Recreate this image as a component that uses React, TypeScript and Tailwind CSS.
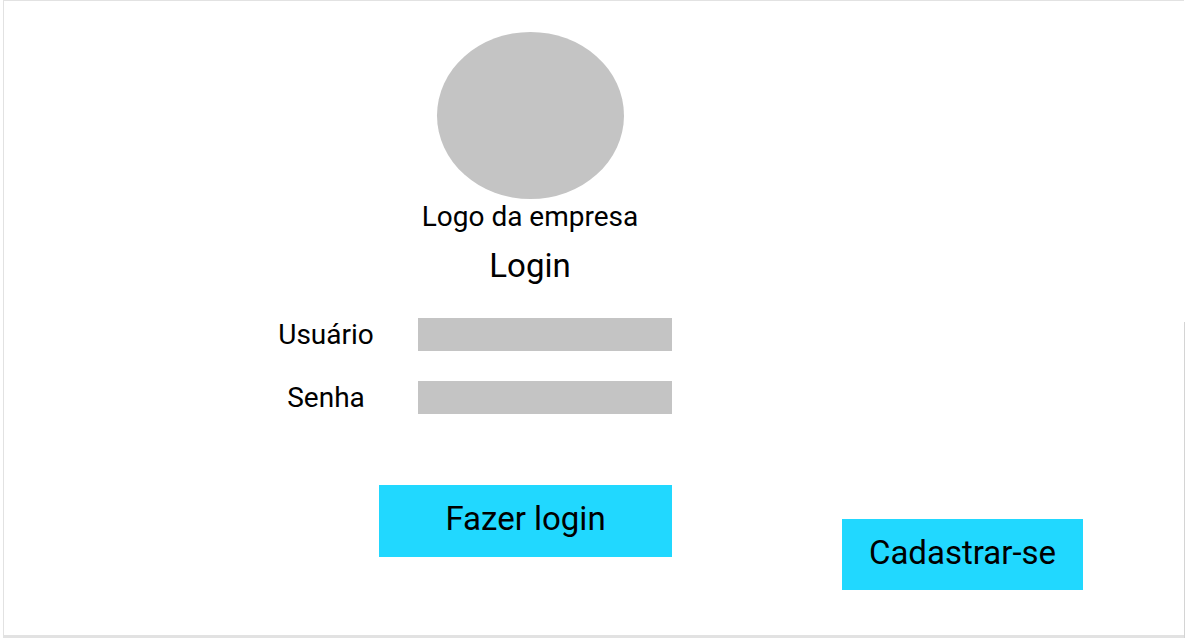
import { useState } from "react";

type FieldProps = {
  id: string;
  label: string;
  type: string;
  autoComplete: string;
  value: string;
  onChange: (value: string) => void;
};

function Field({ id, label, type, autoComplete, value, onChange }: FieldProps) {
  return (
    <div className="flex items-center justify-between">
      <label htmlFor={id} className="w-24 text-center text-[28px] leading-8">
        {label}
      </label>
      <input
        id={id}
        name={id}
        type={type}
        autoComplete={autoComplete}
        value={value}
        onChange={(event) => onChange(event.target.value)}
        className="h-[33px] w-[254px] bg-[#c4c4c4] px-2 text-xl"
      />
    </div>
  );
}

export default function App() {
  const [user, setUser] = useState("");
  const [password, setPassword] = useState("");

  return (
    <div className="flex min-h-screen bg-white pl-[3px] font-['Roboto',sans-serif] text-black">
      <main className="flex grow items-start border-t border-b-3 border-l border-[#e2e2e2] pt-[31px] pl-[274px]">
        <form
          className="flex w-[394px] shrink-0 flex-col"
          onSubmit={(event) => event.preventDefault()}
        >
          <header className="flex w-[284px] flex-col items-center self-end">
            <div className="h-[167px] w-[187px] rounded-[50%] bg-[#c4c4c4]" />
            <p className="text-[28px] leading-9">Logo da empresa</p>
            <h1 className="mt-[11px] text-[33px] leading-10">Login</h1>
          </header>
          <div className="mt-8 flex flex-col gap-[30px]">
            <Field
              id="usuario"
              label="Usuário"
              type="text"
              autoComplete="username"
              value={user}
              onChange={setUser}
            />
            <Field
              id="senha"
              label="Senha"
              type="password"
              autoComplete="current-password"
              value={password}
              onChange={setPassword}
            />
          </div>
          <button
            type="submit"
            className="mt-[71px] h-[72px] w-[293px] self-end bg-[#21d8ff] pb-1 text-[33px] leading-10"
          >
            Fazer login
          </button>
        </form>
        <a
          href="#cadastro"
          className="mr-[101px] mb-[45px] ml-auto flex h-[71px] w-[241px] shrink-0 items-center justify-center self-end bg-[#21d8ff] pb-1 text-[33px] leading-10"
        >
          Cadastrar-se
        </a>
      </main>
      <div className="h-[316px] w-px self-end bg-[#d4d4d4]" />
    </div>
  );
}
